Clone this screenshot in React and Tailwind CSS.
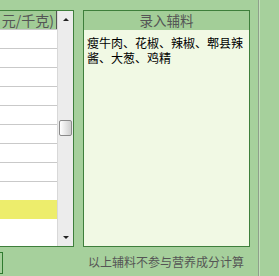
const font = { fontFamily: '"Noto Sans CJK SC", "Noto Sans", sans-serif' };

const rows = Array.from({ length: 9 });

function ScrollArrow({ up }) {
  return (
    <div className="flex h-[17px] items-center justify-center">
      <div
        className={`h-0 w-0 border-x-[3px] border-x-transparent ${
          up ? "border-b-[3px] border-b-[#222]" : "border-t-[3px] border-t-[#222]"
        }`}
      />
    </div>
  );
}

export default function App() {
  return (
    <div className="flex h-[276px] w-[279px] overflow-hidden bg-[#a6d09c] text-[#555]" style={font}>
      <div className="flex w-[258px] shrink-0 flex-col">
        <div className="flex h-[237px] mt-[10px]">
          {/* price list */}
          <div className="ml-[-30px] flex w-[104px] shrink-0 border border-[#3e7f3b] bg-white">
            <div className="flex flex-1 flex-col">
              <div className="flex h-[18px] items-center justify-end whitespace-nowrap border-r border-r-[#555] bg-[#a1cc96] pr-[2px] text-[14px] leading-none">
                元/千克)
              </div>
              {rows.map((_, i) => (
                <div key={i} className="h-[19px] border-t border-[#c9c9c9]" />
              ))}
              <div className="h-[19px] bg-[#eded6c]" />
              <div className="flex-1" />
            </div>
            <div className="flex w-[16px] flex-col border-l border-[#d8d8d8] bg-[#ececec]">
              <ScrollArrow up />
              <div className="h-[92px]" />
              <div className="mx-px h-[16px] rounded-[2px] border border-[#8a8a8a] bg-gradient-to-r from-white to-[#cfcfcf]" />
              <div className="flex-1" />
              <ScrollArrow />
            </div>
          </div>

          {/* extra ingredients */}
          <div className="ml-[9px] flex w-[167px] shrink-0 flex-col border border-[#3e7f3b] bg-[#f1f9e4]">
            <div className="flex h-[19px] items-center justify-center bg-[#a3ce98] text-[13.5px] leading-none text-[#555]">
              录入辅料
            </div>
            <p className="px-[3px] pt-[5px] text-[12px] leading-[15px] text-black">
              瘦牛肉、花椒、辣椒、郫县辣酱、大葱、鸡精
            </p>
          </div>
        </div>

        <div className="flex flex-1 items-start">
          <div className="ml-[-20px] mt-[5px] h-[22px] w-[23px] shrink-0 border border-[#2f7a2f]" />
          <div className="ml-[82px] flex h-[29px] w-[162px] items-center justify-center text-[12px] leading-none text-[#555]">
            以上辅料不参与营养成分计算
          </div>
        </div>
      </div>

      <div className="w-px shrink-0 bg-[#8f9f8c]" />
      <div className="w-px shrink-0 bg-[#c3e2bb]" />
      <div className="flex-1" />
    </div>
  );
}
